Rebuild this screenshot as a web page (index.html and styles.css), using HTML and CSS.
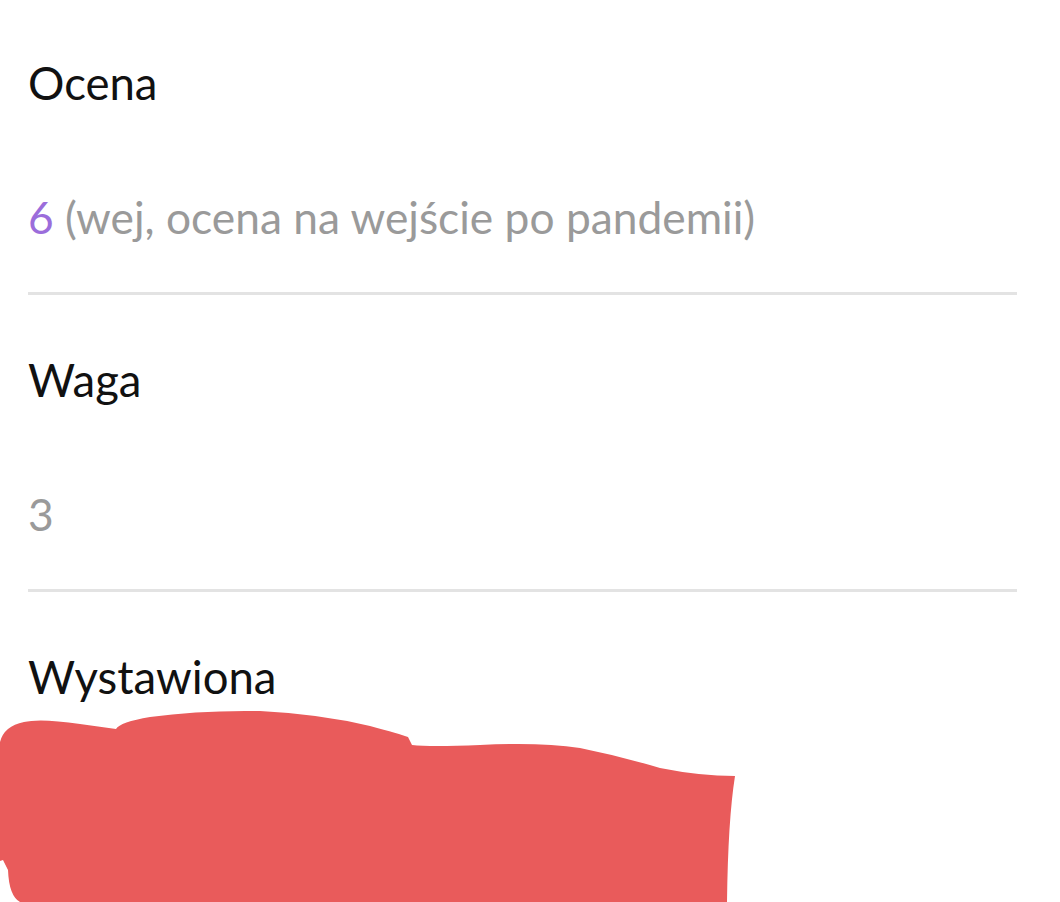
FILE: index.html
```html
<!DOCTYPE html>
<html lang="pl">
<head>
  <meta charset="UTF-8">
  <meta name="viewport" content="width=device-width, initial-scale=1.0">
  <title>Szczegóły oceny</title>
  <link rel="stylesheet" href="styles.css">
</head>
<body>
  <div class="details">
    <!-- Grade -->
    <div class="field">
      <div class="field-label">Ocena</div>
      <div class="field-value"><span class="grade">6</span> (wej, ocena na wejście po pandemii)</div>
    </div>

    <!-- Weight -->
    <div class="field">
      <div class="field-label">Waga</div>
      <div class="field-value">3</div>
    </div>

    <!-- Issued by (scribbled over) -->
    <div class="field last">
      <div class="field-label">Wystawiona</div>
    </div>
  </div>

  <svg class="scribble" width="740" height="192" viewBox="0 0 740 192">
    <path fill="#e95b5b" d="M0 32 Q4 16 24 12 Q40 8 80 14 L116 19 Q120 12 150 7 Q200 0 260 1 Q320 4 370 16 Q400 24 408 27 L412 35 Q430 37 480 35 Q540 32 580 38 Q620 46 660 58 Q700 66 735 66 Q728 110 727 192 L20 192 Q9 186 8 160 L3 150 L0 151 Z"/>
  </svg>
</body>
</html>
```

FILE: styles.css
```css
/* Plain white page, Lato everywhere */
body {
  margin: 0;
  padding: 0;
  background: #fff;
  font-family: Lato, "Noto Sans", sans-serif;
  height: 100vh;
  overflow: hidden;
}

.details {
  padding: 0 43px 0 28px;
}

/* One row of the details list */
.field {
  padding: 58px 0 50px;
  border-bottom: 3px solid #e3e3e3;
}
.field + .field {
  padding-top: 60px;
}
.field.last {
  border-bottom: none;
  padding-bottom: 0;
}

.field-label {
  font-size: 45.5px;
  line-height: 50px;
  color: #111;
}

.field-value {
  margin-top: 84px;
  font-size: 44.3px;
  line-height: 50px;
  color: #9a9a9a;
}

.grade {
  color: #9b6ddb;
}

/* Red marker over the hidden part */
.scribble {
  display: block;
  margin-top: 8px;
}
```
